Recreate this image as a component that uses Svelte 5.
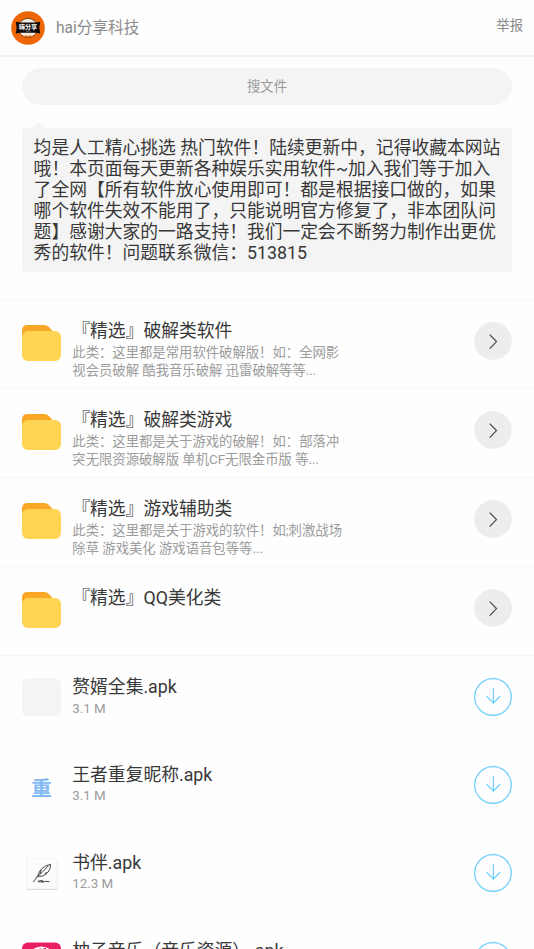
<script>
  const notice = [
    '均是人工精心挑选 热门软件！陆续更新中，记得收藏本网站',
    '哦！本页面每天更新各种娱乐实用软件~加入我们等于加入',
    '了全网【所有软件放心使用即可！都是根据接口做的，如果',
    '哪个软件失效不能用了，只能说明官方修复了，非本团队问',
    '题】感谢大家的一路支持！我们一定会不断努力制作出更优',
    '秀的软件！问题联系微信：513815'
  ];
  const folders = [
    { name: '『精选』破解类软件', desc: ['此类：这里都是常用软件破解版！如：全网影', '视会员破解 酷我音乐破解 迅雷破解等等...'] },
    { name: '『精选』破解类游戏', desc: ['此类：这里都是关于游戏的破解！如：部落冲', '突无限资源破解版 单机CF无限金币版 等...'] },
    { name: '『精选』游戏辅助类', desc: ['此类：这里都是关于游戏的软件！如;刺激战场', '除草 游戏美化 游戏语音包等等...'] },
    { name: '『精选』QQ美化类', desc: [] }
  ];
  const files = [
    { name: '赘婿全集.apk', size: '3.1 M', icon: 'blank' },
    { name: '王者重复昵称.apk', size: '3.1 M', icon: 'repeat' },
    { name: '书伴.apk', size: '12.3 M', icon: 'quill' },
    { name: '柚子音乐（音乐资源）.apk', size: '', icon: 'music' }
  ];
</script>

<div class="page">
  <header>
    <svg class="avatar" width="34" height="34" viewBox="0 0 34 34">
      <circle cx="17" cy="17" r="16.8" fill="#ee6706" />
      <circle cx="17" cy="17" r="9.6" fill="#f7efe4" stroke="#5b3210" stroke-width="0.8" />
      <path d="M12 25.2l3-.9 2 1 2-1 3 .9-5 1.2z" fill="#ee6706" />
      <path d="M4.800 10.800l4 .7h16.400l4-.7-.9 5.900.9 5.800-4-.7H8.800l-4 .7.9-5.800z" fill="#0c0907" />
      <text x="17" y="18" text-anchor="middle" class="badge">嗨分享</text>
      <path d="M15 20.2h4.5" stroke="#b5b0aa" stroke-width="0.6" />
    </svg>
    <span class="title">hai分享科技</span>
    <span class="report">举报</span>
  </header>

  <div class="search">搜文件</div>

  <section class="notice">
    {#each notice as line}<p>{line}</p>{/each}
  </section>

  {#each folders as f}
    <article class="row folder">
      <svg class="icon" width="39" height="39" viewBox="0 0 39 39">
        <path d="M0 14V6.500Q0 1 5.500 1H22.500Q25 1 26.600 2.700L32 8.500V14z" fill="#f9a825" />
        <rect y="7" width="39" height="30" rx="6" fill="#ffd454" />
      </svg>
      <div class="info">
        <div class="name">{f.name}</div>
        {#each f.desc as d}<div class="desc">{d}</div>{/each}
      </div>
      <svg class="action" width="38" height="38" viewBox="0 0 38 38">
        <circle cx="19" cy="19" r="18.900" fill="#ededed" />
        <path d="M15.700 12.600L22.500 19.600L15.700 26.600" fill="none" stroke="#444" stroke-width="1.200" />
      </svg>
    </article>
  {/each}

  <div class="files">
    {#each files as f}
      <article class="row file">
        <svg class="icon" width="39" height="39" viewBox="0 0 39 39">
          {#if f.icon === 'blank'}
            <rect y="0.500" width="39" height="38" rx="6" fill="#f4f4f4" />
          {:else if f.icon === 'repeat'}
            <text x="19.600" y="30.300" text-anchor="middle" class="glyph">重</text>
          {:else if f.icon === 'quill'}
            <rect x="4" y="4.800" width="31.400" height="31" rx="2" fill="#ccc" />
            <rect x="4.200" y="4" width="31" height="31" rx="1.800" fill="#fbfbfb" stroke="#eee" stroke-width="0.500" />
            <g fill="none" stroke="#333" stroke-width="0.900" stroke-linecap="round" transform="translate(0 -1.200)">
              <path d="M11.500 29L16 22.500Q18 14 28.500 11.500Q29 16 26 19.500L23 20.500L24.500 21Q20.500 24.500 16 23.500" />
              <path d="M15 24.500L26 13.500M18 21l1-3.500" />
              <path d="M16 28.500Q23 26.500 20 29.300Q23 28 27 28.800M17 29h4" />
            </g>
          {:else}
            <rect y="0.500" width="39" height="38" rx="6" fill="#e91e63" />
            <circle cx="19.500" cy="19" r="14.500" fill="#fff" />
            <path d="M15 9Q19 6 20 8L24 6.500M14 12l5-3 6 3" fill="none" stroke="#e91e63" stroke-width="1.600" />
          {/if}
        </svg>
        <div class="info">
          <div class="name">{f.name}</div>
          <div class="desc">{f.size}</div>
        </div>
        <svg class="action" width="38" height="38" viewBox="0 0 38 38">
          <circle cx="19" cy="19" r="18.300" fill="none" stroke="#72cffb" stroke-width="1.250" />
          <path d="M19.400 10.200V25.300M12.700 18.300L19.400 25.200L26.100 18.300" fill="none" stroke="#72cffb" stroke-width="1.250" />
        </svg>
      </article>
    {/each}
  </div>
</div>

<style>
  .page {
    width: 534px;
    height: 949px;
    overflow: hidden;
    background: #fefefe;
    color: #383838;
    font-family: Roboto, 'Noto Sans CJK SC', sans-serif;
    text-spacing-trim: space-all;
    white-space: nowrap;
  }
  header {
    display: flex;
    align-items: center;
    box-sizing: border-box;
    height: 57px;
    padding: 0 11px;
    border-bottom: 2px solid #f0f0f0;
  }
  .title {
    margin-left: 11px;
    font-size: 15.6px;
    line-height: 20px;
    color: #8c8c8c;
  }
  .report {
    margin-left: auto;
    font-size: 13.35px;
    line-height: 18px;
    padding-bottom: 4px;
    color: #888;
  }
  .badge {
    font-size: 6.2px;
    font-weight: 700;
    fill: #fff;
  }
  .search {
    margin: 11px 22px 0;
    height: 37px;
    border-radius: 19px;
    background: #f4f4f4;
    color: #999;
    font-size: 13.35px;
    line-height: 37px;
    text-align: center;
  }
  .notice {
    position: relative;
    box-sizing: border-box;
    margin: 23px 22px 27px;
    height: 144px;
    padding: 9px 11.6px;
    border-radius: 4px;
    background: #f4f4f4;
    font-size: 17.8px;
    line-height: 21.1px;
  }
  .notice::before {
    content: '';
    position: absolute;
    left: 10px;
    top: -6px;
    border: 7px solid transparent;
    border-top: 0;
    border-bottom: 6px solid #f4f4f4;
  }
  .notice p {
    margin: 0;
  }
  .row {
    display: flex;
    box-sizing: border-box;
    padding: 0 22px;
  }
  .folder {
    height: 89px;
    padding-top: 20px;
    border-top: 1px solid #f5f5f5;
  }
  .files {
    border-top: 1px solid #f5f5f5;
    padding-top: 20px;
  }
  .file {
    height: 87.9px;
  }
  .icon {
    flex: none;
    margin-top: 2px;
  }
  .folder .icon {
    margin-top: 4px;
  }
  .info {
    flex: 1;
    margin-left: 11.3px;
  }
  .name {
    font-size: 17.8px;
    line-height: 22px;
  }
  .folder .name {
    margin-bottom: 2px;
  }
  .desc {
    font-size: 13.35px;
    line-height: 17.8px;
    color: #9c9c9c;
  }
  .file .desc {
    margin-top: 1.6px;
  }
  .action {
    flex: none;
    margin-top: 2px;
  }
  .glyph {
    font-size: 20.5px;
    font-weight: 700;
    fill: #82b9f2;
  }
</style>
